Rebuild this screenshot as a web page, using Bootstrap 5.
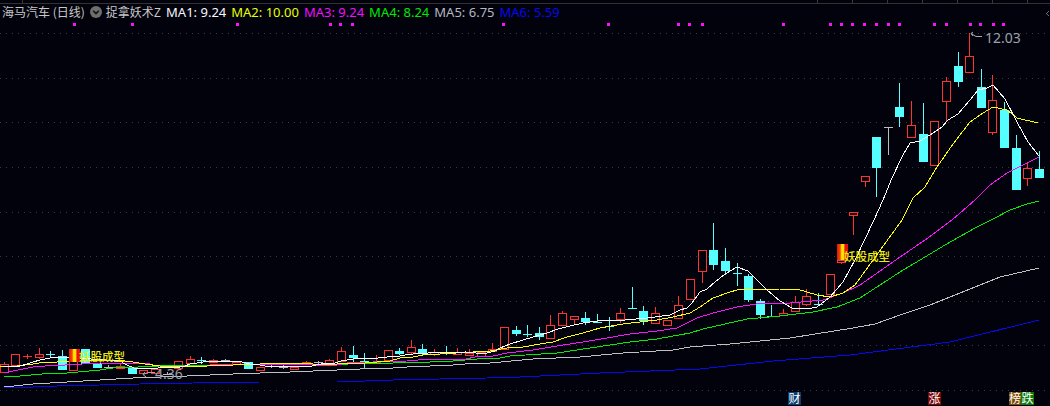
<!DOCTYPE html>
<html lang="zh-CN">
<head>
<meta charset="utf-8">
<title>海马汽车 (日线)</title>
<link rel="stylesheet" href="https://cdn.jsdelivr.net/npm/bootstrap@5.3.0/dist/css/bootstrap.min.css">
<style>
html,body{margin:0;height:100%;background:#02020c;overflow:hidden}
.kline-stage{width:1050px;height:406px;background:#02020c;font-family:"Noto Sans","Noto Sans CJK SC",sans-serif}
.kline-canvas{display:block;width:1050px;height:406px;shape-rendering:crispEdges}
.kline-legend{top:3px;left:2px;font-size:13px;line-height:18px;white-space:nowrap;gap:5px;color:#c8c8c8}
.kline-name{font-family:"Noto Sans CJK SC","Noto Sans",sans-serif;font-size:12px;letter-spacing:0}
.kline-toggle{width:12px;height:12px;border-radius:50%;background:#6e6e6e;margin:0 -1px 0 0}
.kline-toggle svg{display:block;shape-rendering:auto}
.ma-a{color:#f4f8ff}.ma-b{color:#e8ff00}.ma-c{color:#f010ff}.ma-d{color:#00e800}.ma-e{color:#b4b8c0}.ma-f{color:#0808ee}
.kline-label{font-family:"Noto Sans CJK SC",sans-serif;font-size:11.500px;font-weight:500;fill:#ecec10}
.kline-price{font-family:"Noto Sans",sans-serif;font-size:14px;fill:#9aa2ac}
.kline-tagtxt{font-family:"Noto Sans CJK SC",sans-serif;font-size:12px;fill:#fff;text-anchor:middle}
</style>
</head>
<body>
<div class="kline-stage position-relative">
  <svg class="kline-canvas" id="chart" viewBox="0 0 1050 406" xmlns="http://www.w3.org/2000/svg">
    <defs>
      <linearGradient id="signfill" x1="0" x2="1" y1="0" y2="0">
        <stop offset="0" stop-color="#e81010"/><stop offset=".28" stop-color="#f04a00"/>
        <stop offset=".42" stop-color="#ffe000"/><stop offset=".62" stop-color="#ffe000"/>
        <stop offset=".72" stop-color="#e81010"/><stop offset="1" stop-color="#e81010"/>
      </linearGradient>
    </defs>
    <g id="grid"></g><g id="candles"></g><g id="averages"></g><g id="marks"></g>
    <rect x="69" y="349" width="11" height="13" fill="url(#signfill)"/>
    <rect x="837" y="244" width="11" height="16" fill="url(#signfill)"/>
    <text class="kline-label" x="79" y="361">妖股成型</text>
    <text class="kline-label" x="844" y="261">妖股成型</text>
    <g fill="none" stroke="#a8a8a8" shape-rendering="auto" stroke-width="1">
      <path d="M982 36.5H976L971 33.5M973 32L971 33.5L973 36"/>
      <path d="M155 372.5H148L143 374.5M145 372L143 374.5L146 377"/>
    </g>
    <text class="kline-price" x="985" y="43">12.03</text>
    <text class="kline-price" x="155" y="379">4.36</text>
    <rect x="788" y="392" width="13" height="13" fill="#0a3c6e"/><text class="kline-tagtxt" x="794.5" y="403">财</text>
    <rect x="928" y="392" width="13" height="13" fill="#7a0606"/><text class="kline-tagtxt" x="934.5" y="403">涨</text>
    <rect x="1009" y="392" width="12" height="13" fill="#7c4800"/><text class="kline-tagtxt" x="1015" y="403">榜</text>
    <rect x="1021" y="392" width="13" height="13" fill="#0a7a0a"/><text class="kline-tagtxt" x="1027.5" y="403">跌</text>
  </svg>
  <div class="kline-legend position-absolute d-flex align-items-center">
    <span class="kline-name">海马汽车 (日线)</span>
    <span class="kline-toggle d-inline-flex align-items-center justify-content-center">
      <svg width="12" height="12" viewBox="0 0 12 12"><path d="M3.2 4.8L6 7.6L8.8 4.8" fill="none" stroke="#101010" stroke-width="1.5"/></svg>
    </span>
    <span class="kline-name">捉拿妖术Z</span>
    <span class="ma-a">MA1: 9.24</span>
    <span class="ma-b">MA2: 10.00</span>
    <span class="ma-c">MA3: 9.24</span>
    <span class="ma-d">MA4: 8.24</span>
    <span class="ma-e">MA5: 6.75</span>
    <span class="ma-f">MA6: 5.59</span>
  </div>
</div>
<script src="https://cdn.jsdelivr.net/npm/bootstrap@5.3.0/dist/js/bootstrap.bundle.min.js"></script>
<script>
var NS="http://www.w3.org/2000/svg";
function el(par,name,attrs){var n=document.createElementNS(NS,name);for(var k in attrs)n.setAttribute(k,attrs[k]);document.getElementById(par).appendChild(n);return n;}
var RED="#ff3232",CY="#55ffff",GR="#bcbcbc";
var X=function(i){return Math.round(3.67+11.633*i);};
/* [colour, high, bodyTop, bodyBottom, low] */
var K=[
["r",362,364,372,372],["r",354,354,365,365],["r",354,356,356,359],["r",348,354,357,359],["c",351,354,354,358],
["c",350,356,369,370],["r",358,358,370,370],["c",349,349,363,363],["c",363,363,367,367],["g",365,367,367,369],
["r",364,366,368,369],["c",368,368,373,373],["r",370,370,373,373],["r",369,369,373,373],["g",372,374,374,375],
["r",361,361,368,368],["r",356,359,363,363],["c",357,360,360,364],["r",359,360,362,362],["g",359,360,360,362],
["r",361,362,364,364],["c",362,362,368,369],["r",367,367,370,370],["g",364,366,366,368],["g",365,367,367,369],
["r",367,367,369,369],["r",361,362,364,364],["g",361,362,362,364],["r",359,360,363,363],["r",347,351,361,361],
["c",346,355,357,363],["c",353,361,361,369],["r",355,362,363,364],["r",350,350,360,360],["c",348,351,353,355],
["r",340,347,352,355],["c",344,349,352,355],["r",349,352,354,356],["c",346,352,352,355],["r",348,352,354,354],
["r",349,353,355,355],["r",352,352,356,356],["r",343,349,351,351],["r",327,327,349,349],["c",326,330,333,336],
["c",325,334,334,337],["c",327,333,336,340],["r",315,325,338,338],["r",311,313,325,325],["r",316,316,319,325],
["c",312,318,321,325],["c",314,322,322,323],["c",317,326,326,331],["r",308,313,319,323],["c",287,308,308,309],
["c",306,311,320,325],["r",307,313,323,323],["r",320,320,325,325],["r",296,305,318,318],["r",279,279,299,299],
["r",250,250,271,283],["c",223,250,264,270],["c",248,261,270,275],["c",263,273,273,286],["c",274,276,299,302],
["c",299,301,314,319],["c",305,316,316,317],["r",309,313,315,315],["r",296,302,311,311],["r",289,296,304,306],
["c",293,304,304,305],["r",274,274,294,294],["r",258,260,262,264],["r",212,212,215,235],["r",176,176,181,187],
["c",137,137,167,197],["g",127,127,127,155],["c",83,107,116,127],["r",101,125,137,137],["c",103,134,161,161],
["r",121,121,165,165],["r",77,81,101,122],["c",52,66,81,87],["r",33,56,72,72],["c",69,87,107,107],
["r",75,100,132,135],["c",102,110,147,147],["c",135,148,189,189],["r",162,168,178,186],["c",151,169,177,178]
];
var colors={r:RED,c:CY,g:GR};
K.forEach(function(d,i){
  var x=X(i),c=colors[d[0]],t=d[2],b=d[3];
  if(d[1]<t) el("candles","rect",{x:x,y:d[1],width:1,height:t-d[1],fill:c});
  if(d[4]>b) el("candles","rect",{x:x,y:b,width:1,height:d[4]-b,fill:c});
  if(t===b){ el("candles","rect",{x:x-4,y:t,width:9,height:1,fill:c}); return; }
  if(d[0]==="r"){
    el("candles","rect",{x:x-3.5,y:t+.5,width:8,height:b-t,fill:"#02020c",stroke:c,"stroke-width":1});
  }else{
    el("candles","rect",{x:x-4,y:t,width:9,height:b-t+1,fill:c});
  }
});
[33,78,122,167,212,256,301,345,390].forEach(function(y){
  el("grid","line",{x1:0,x2:1050,y1:y+.5,y2:y+.5,stroke:"#3a3a3a","stroke-width":1,"stroke-dasharray":"1 5"});
});
el("grid","rect",{x:0,y:3,width:1050,height:1,fill:"#323232"});
[22,817,852,887,922,957,992,1027].forEach(function(x){el("grid","rect",{x:x,y:0,width:1,height:3,fill:"#383838"});});
el("grid","path",{d:"M1049 11L1046.500 13.500L1049 16",fill:"none",stroke:"#707070"});
[74,132,237,330,340,352,503,608,678,689,702,783,830,841,852,864,876,888,899,934,946,970,980,993,1003].forEach(function(x){
  el("marks","rect",{x:x-1,y:23,width:3,height:3,fill:"#ff10ff"});
});
var L={
"#c0c0c0":[[4,387],[33,384],[67,382],[100,380],[133,378],[187,376],[233,374],[260,373],[290,372],[313,371],[337,370],[360,369],[393,368],[407,367],[430,366],[453,365],[477,363],[490,363],[533,359],[580,357],[623,353],[673,350],[690,347],[730,344],[790,338],[853,328],[875,324],[900,315],[930,305],[960,293],[1000,277],[1039,268]],
"#0808f0":[[4,387],[33,387],[57,386],[100,385],[140,384],[193,383],[260,382],[337,382],[393,380],[440,379],[487,378],[520,377],[600,373],[700,369],[773,361],[850,355],[950,342],[1039,320]],
"#00f000":[[4,377],[20,376],[42,374],[67,373],[100,370],[113,368],[138,367],[180,365],[233,365],[260,364],[290,364],[313,365],[337,365],[360,363],[393,363],[407,362],[430,362],[453,361],[477,359],[500,358],[510,356],[557,353],[590,348],[630,342],[657,339],[690,333],[703,329],[747,319],[780,316],[813,312],[837,307],[860,298],[900,272],[945,245],[975,228],[993,219],[1010,210],[1027,204],[1039,201]],
"#ff10ff":[[4,373],[13,371],[33,367],[45,366],[65,365],[100,363],[150,364],[210,364],[290,364],[313,365],[337,365],[347,363],[373,362],[407,361],[430,359],[466,359],[475,357],[493,356],[507,353],[533,350],[557,346],[583,342],[607,338],[630,334],[657,331],[677,328],[697,318],[713,313],[737,307],[763,303],[790,303],[823,300],[843,293],[860,285],[900,257],[925,240],[952,220],[975,200],[990,185],[1007,173],[1027,163],[1039,157]],
"#ffff00":[[0,367],[17,366],[33,364],[45,362],[57,362],[83,360],[120,360],[125,361],[133,362],[145,364],[160,366],[207,366],[233,365],[260,364],[267,363],[290,363],[313,364],[337,364],[347,363],[365,363],[390,361],[400,358],[413,357],[423,355],[490,351],[507,348],[523,347],[540,344],[553,342],[567,337],[583,333],[600,328],[623,324],[640,322],[657,320],[673,317],[690,313],[700,307],[713,298],[730,292],[737,290],[780,289],[797,289],[807,292],[817,295],[830,297],[843,293],[855,285],[902,220],[913,198],[925,187],[937,167],[953,144],[970,122],[983,113],[993,107],[1007,110],[1017,118],[1038,123]],
"#ffffff":[[4,366],[20,366],[27,364],[33,362],[40,360],[50,358],[62,357],[120,361],[125,364],[129,366],[137,369],[180,367],[185,366],[190,364],[210,361],[230,361],[242,362],[250,364],[260,365],[270,367],[285,366],[312,366],[325,363],[335,363],[341,361],[353,359],[365,358],[378,358],[387,357],[400,356],[405,355],[413,354],[428,353],[466,352],[476,353],[487,353],[495,351],[500,348],[510,344],[523,340],[533,337],[547,333],[558,329],[570,326],[583,323],[597,321],[625,320],[647,318],[670,315],[680,310],[687,308],[692,303],[700,292],[707,289],[715,282],[725,274],[737,267],[748,271],[755,278],[767,290],[780,301],[792,308],[807,309],[817,307],[830,297],[843,282],[855,260],[874,220],[883,200],[892,178],[903,155],[910,143],[920,141],[930,135],[942,127],[948,120],[958,114],[970,100],[978,90],[987,88],[993,85],[1005,99],[1017,122],[1028,142],[1039,156]]
};
Object.keys(L).forEach(function(c){
  el("averages","polyline",{points:L[c].map(function(p){return p[0]+","+p[1];}).join(" "),fill:"none",stroke:c,"stroke-width":1});
});
</script>
</body>
</html>
